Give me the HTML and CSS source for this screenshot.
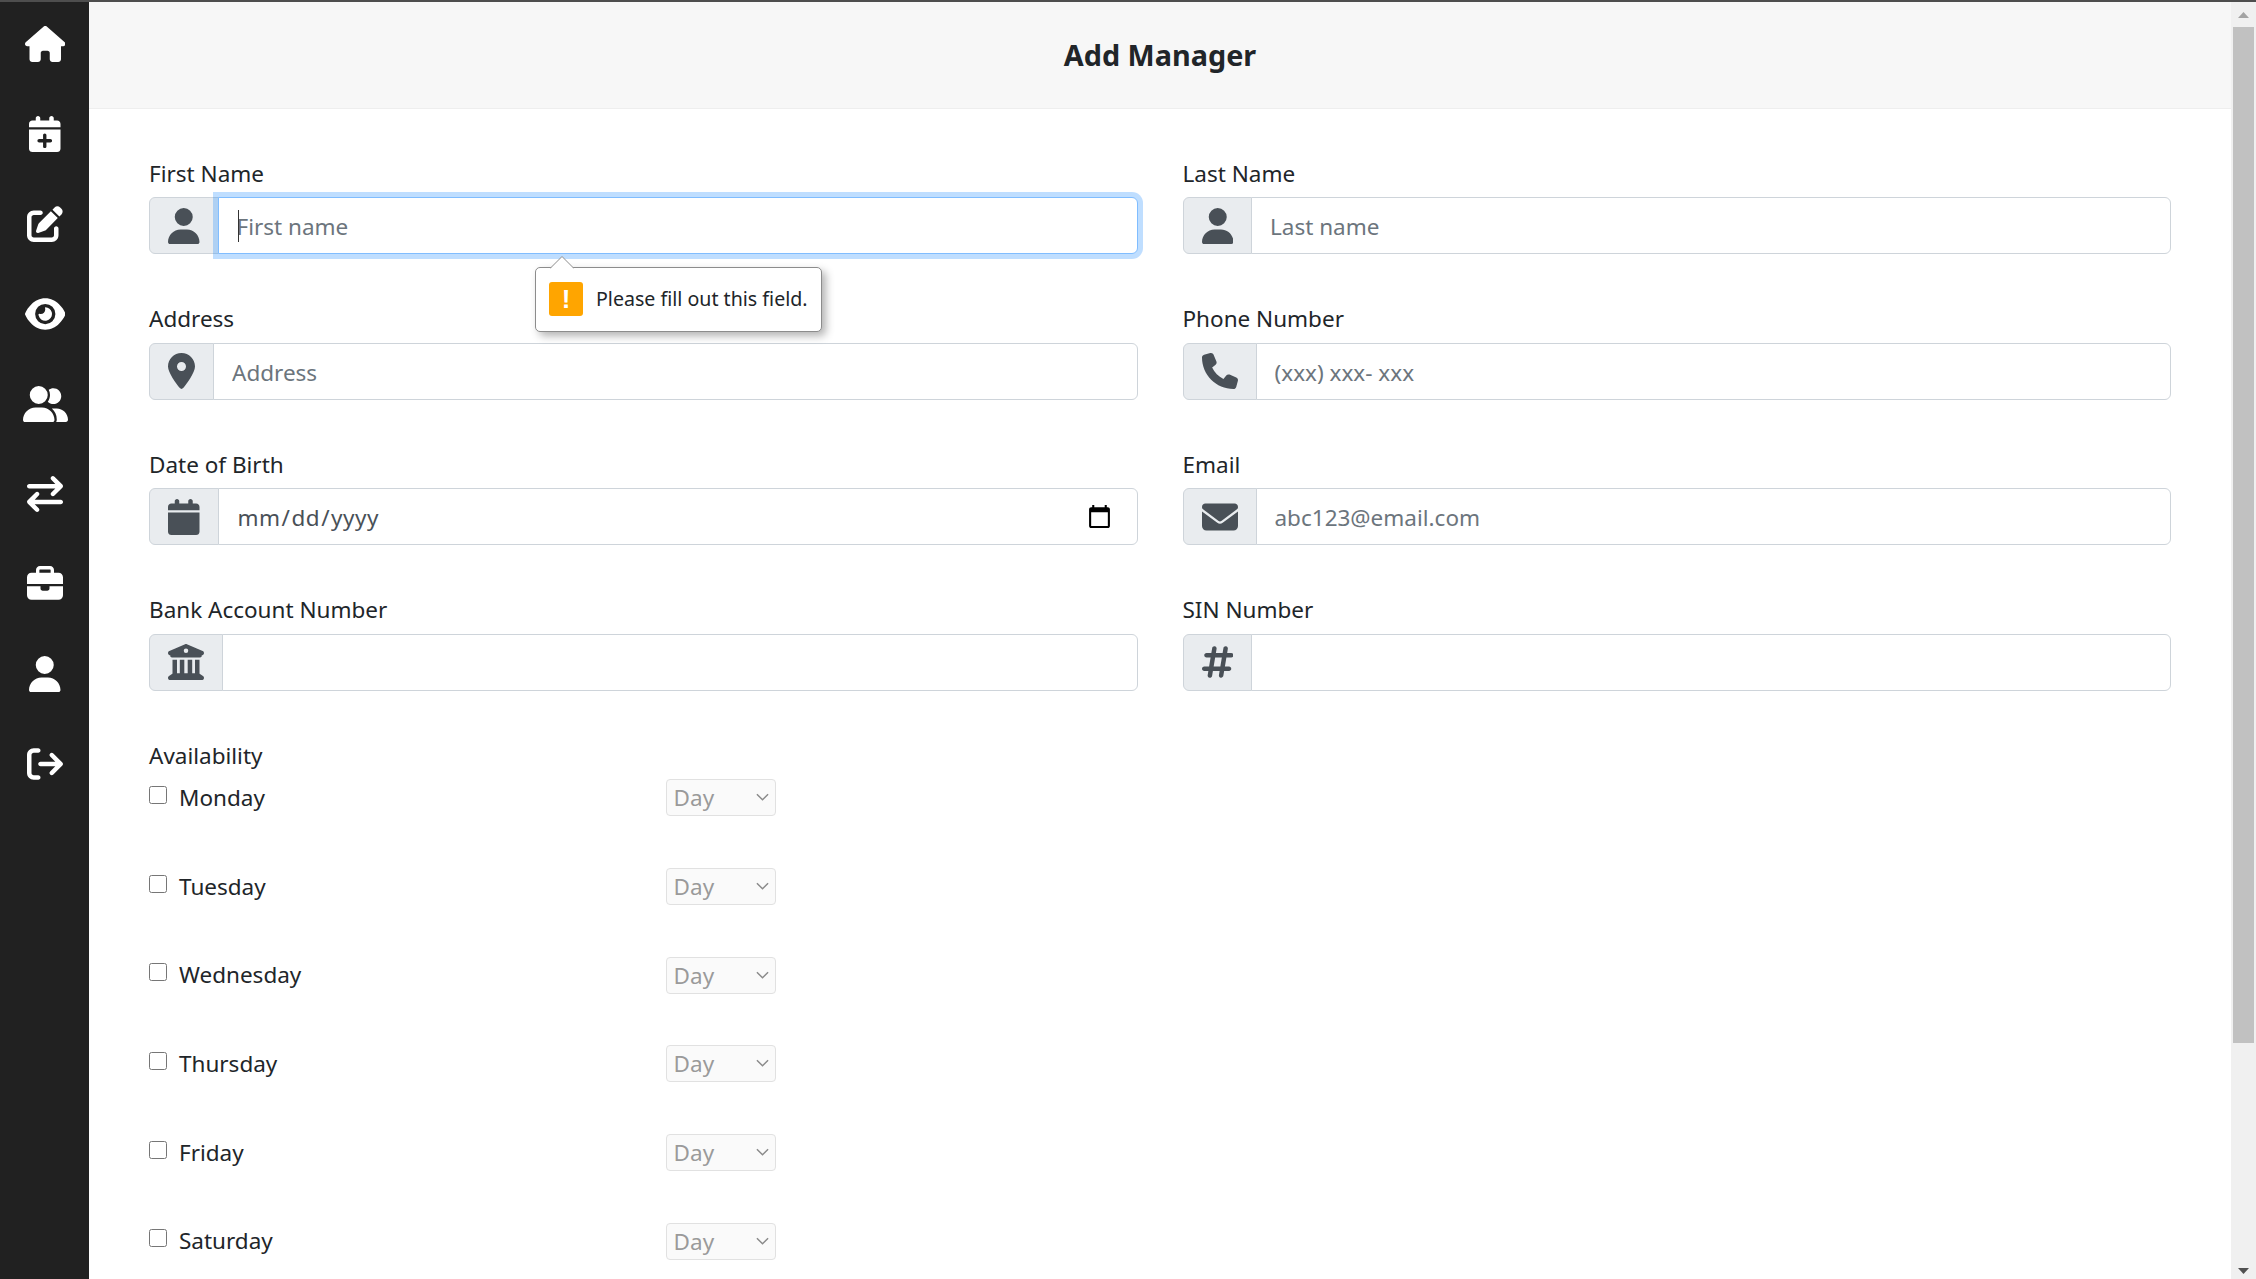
FILE: index.html
```html
<!DOCTYPE html>
<html lang="en">
<head>
<meta charset="utf-8">
<title>Add Manager</title>
<link rel="stylesheet" href="styles.css">
</head>
<body>
<div class="topline"></div>
<div class="shell">
  <nav class="sidebar">
    <svg class="nav-icon" viewBox="0 0 576 512"><path d="M575.8 255.5c0 18-15 32.1-32 32.1h-32l.7 160.2c0 2.7-.2 5.4-.5 8.1V472c0 22.1-17.9 40-40 40H456c-1.1 0-2.2 0-3.3-.1c-1.4 .1-2.8 .1-4.2 .1H416 392c-22.1 0-40-17.9-40-40V448 384c0-17.7-14.3-32-32-32H256c-17.7 0-32 14.3-32 32v64 24c0 22.1-17.9 40-40 40H160 128.1c-1.5 0-3-.1-4.5-.2c-1.2 .1-2.4 .2-3.6 .2H104c-22.1 0-40-17.9-40-40V360c0-.9 0-1.9 .1-2.8V287.6H32c-18 0-32-14-32-32.1c0-9 3-17 10-24L266.4 8c7-7 15-8 22-8s15 2 21 7L564.8 231.5c8 7 12 15 11 24z"/></svg>
    <svg class="nav-icon" viewBox="0 0 448 512"><path d="M96 32V64H48C21.5 64 0 85.5 0 112v48H448V112c0-26.5-21.5-48-48-48H352V32c0-17.7-14.3-32-32-32s-32 14.3-32 32V64H160V32c0-17.7-14.3-32-32-32S96 14.3 96 32zM448 192H0V464c0 26.5 21.5 48 48 48H400c26.5 0 48-21.5 48-48V192zM224 248c13.3 0 24 10.7 24 24v56h56c13.3 0 24 10.7 24 24s-10.7 24-24 24H248v56c0 13.3-10.7 24-24 24s-24-10.7-24-24V376H144c-13.3 0-24-10.7-24-24s10.7-24 24-24h56V272c0-13.3 10.7-24 24-24z"/></svg>
    <svg class="nav-icon" viewBox="0 0 512 512"><path d="M471.6 21.7c-21.9-21.9-57.3-21.9-79.2 0L362.3 51.7l97.9 97.9 30.1-30.1c21.9-21.9 21.9-57.3 0-79.2L471.6 21.7zm-299.2 220c-6.1 6.1-10.8 13.6-13.5 21.9l-29.6 88.8c-2.9 8.6-.6 18.1 5.8 24.6s15.9 8.7 24.6 5.8l88.8-29.6c8.2-2.7 15.7-7.4 21.9-13.5L437.7 172.3 339.7 74.3 172.4 241.7zM96 64C43 64 0 107 0 160V416c0 53 43 96 96 96H352c53 0 96-43 96-96V320c0-17.7-14.3-32-32-32s-32 14.3-32 32v96c0 17.7-14.3 32-32 32H96c-17.7 0-32-14.3-32-32V160c0-17.7 14.3-32 32-32h96c17.7 0 32-14.3 32-32s-14.3-32-32-32H96z"/></svg>
    <svg class="nav-icon" viewBox="0 0 576 512"><path d="M288 32c-80.8 0-145.5 36.8-192.6 80.6C48.6 156 17.3 208 2.5 243.7c-3.3 7.9-3.3 16.7 0 24.6C17.3 304 48.6 356 95.4 399.4C142.5 443.2 207.2 480 288 480s145.5-36.8 192.6-80.6c46.8-43.5 78.1-95.4 93-131.1c3.3-7.9 3.3-16.7 0-24.6c-14.9-35.7-46.2-87.7-93-131.1C433.5 68.8 368.8 32 288 32zM144 256a144 144 0 1 1 288 0 144 144 0 1 1 -288 0zm144-64c0 35.3-28.7 64-64 64c-7.1 0-13.9-1.2-20.3-3.3c-5.5-1.8-11.9 1.6-11.7 7.4c.3 6.9 1.3 13.8 3.2 20.7c13.7 51.2 66.4 81.6 117.6 67.9s81.6-66.4 67.9-117.6c-11.1-41.5-47.8-69.4-88.6-71.1c-5.8-.2-9.2 6.1-7.4 11.7c2.1 6.4 3.3 13.2 3.3 20.3z"/></svg>
    <svg class="nav-icon" viewBox="0 0 640 512"><path d="M96 128a128 128 0 1 1 256 0A128 128 0 1 1 96 128zM0 482.3C0 383.8 79.8 304 178.3 304h91.4C368.2 304 448 383.8 448 482.3c0 16.4-13.3 29.7-29.7 29.7H29.7C13.3 512 0 498.7 0 482.3zM609.3 512H471.4c5.4-9.4 8.6-20.3 8.6-32v-8c0-60.7-27.1-115.2-69.8-151.8c2.4-.1 4.7-.2 7.1-.2h61.4C567.8 320 640 392.2 640 481.3c0 17-13.8 30.7-30.7 30.7zM432 256c-31 0-59-12.6-79.3-32.9C372.4 196.5 384 163.6 384 128c0-26.8-6.6-52.1-18.3-74.3C384.3 40.1 407.2 32 432 32c61.9 0 112 50.1 112 112s-50.1 112-112 112z"/></svg>
    <svg class="nav-icon" viewBox="0 0 512 512"><path d="M32 176h370.8l-57.38 57.38c-12.5 12.5-12.5 32.75 0 45.25C351.6 284.9 359.8 288 368 288s16.38-3.125 22.62-9.375l112-112c12.5-12.5 12.5-32.75 0-45.25l-112-112c-12.5-12.5-32.75-12.5-45.25 0s-12.5 32.75 0 45.25L402.8 112H32c-17.69 0-32 14.31-32 32S14.31 176 32 176zM480 336H109.3l57.38-57.38c12.5-12.5 12.5-32.75 0-45.25s-32.75-12.5-45.25 0l-112 112c-12.5 12.5-12.5 32.75 0 45.25l112 112C127.6 508.9 135.8 512 144 512s16.38-3.125 22.62-9.375c12.5-12.5 12.5-32.75 0-45.25L109.3 400H480c17.69 0 32-14.31 32-32S497.7 336 480 336z"/></svg>
    <svg class="nav-icon" viewBox="0 0 512 512"><path d="M184 48H328c4.4 0 8 3.6 8 8V96H176V56c0-4.4 3.6-8 8-8zm-56 8V96H64C28.7 96 0 124.7 0 160v96H192 320 512V160c0-35.3-28.7-64-64-64H384V56c0-30.9-25.1-56-56-56H184c-30.9 0-56 25.1-56 56zM512 288H320v32c0 17.7-14.3 32-32 32H224c-17.7 0-32-14.3-32-32V288H0V416c0 35.3 28.7 64 64 64H448c35.3 0 64-28.7 64-64V288z"/></svg>
    <svg class="nav-icon" viewBox="0 0 448 512"><path d="M224 256A128 128 0 1 0 224 0a128 128 0 1 0 0 256zm-45.7 48C79.8 304 0 383.8 0 482.3C0 498.7 13.3 512 29.7 512H418.3c16.4 0 29.7-13.3 29.7-29.7C448 383.8 368.2 304 269.7 304H178.3z"/></svg>
    <svg class="nav-icon" viewBox="0 0 512 512"><path d="M502.6 278.6c12.5-12.5 12.5-32.8 0-45.3l-128-128c-12.5-12.5-32.8-12.5-45.3 0s-12.5 32.8 0 45.3L402.7 224 192 224c-17.7 0-32 14.3-32 32s14.3 32 32 32l210.7 0-73.4 73.4c-12.5 12.5-12.5 32.8 0 45.3s32.8 12.5 45.3 0l128-128zM160 96c17.7 0 32-14.3 32-32s-14.3-32-32-32L96 32C43 32 0 75 0 128L0 384c0 53 43 96 96 96l64 0c17.7 0 32-14.3 32-32s-14.3-32-32-32l-64 0c-17.7 0-32-14.3-32-32l0-256c0-17.7 14.3-32 32-32l64 0z"/></svg>
  </nav>

  <main class="main">
    <header class="page-header"><h1 class="page-title">Add Manager</h1></header>
    <form class="form">
      <div class="field-grid">
        <div class="field first-field">
          <label class="field-label">First Name</label>
          <div class="input-group">
            <span class="addon"><svg class="addon-icon" viewBox="0 0 448 512"><path d="M224 256A128 128 0 1 0 224 0a128 128 0 1 0 0 256zm-45.7 48C79.8 304 0 383.8 0 482.3C0 498.7 13.3 512 29.7 512H418.3c16.4 0 29.7-13.3 29.7-29.7C448 383.8 368.2 304 269.7 304H178.3z"/></svg></span>
            <input class="control control-focus" type="text" placeholder="First name">
            <span class="caret"></span>
          </div>
          <div class="tooltip">
            <svg class="tooltip-arrow" viewBox="0 0 24 13"><path d="M0 13 L12 1 L24 13" /></svg>
            <span class="tooltip-badge">!</span>
            <span class="tooltip-text">Please fill out this field.</span>
          </div>
        </div>
        <div class="field">
          <label class="field-label">Last Name</label>
          <div class="input-group">
            <span class="addon"><svg class="addon-icon" viewBox="0 0 448 512"><path d="M224 256A128 128 0 1 0 224 0a128 128 0 1 0 0 256zm-45.7 48C79.8 304 0 383.8 0 482.3C0 498.7 13.3 512 29.7 512H418.3c16.4 0 29.7-13.3 29.7-29.7C448 383.8 368.2 304 269.7 304H178.3z"/></svg></span>
            <input class="control" type="text" placeholder="Last name">
          </div>
        </div>
        <div class="field">
          <label class="field-label">Address</label>
          <div class="input-group">
            <span class="addon"><svg class="addon-icon" viewBox="0 0 384 512"><path d="M215.7 499.2C267 435 384 279.4 384 192C384 86 298 0 192 0S0 86 0 192c0 87.4 117 243 168.3 307.2c12.3 15.3 35.1 15.3 47.4 0zM192 256a64 64 0 1 1 0-128 64 64 0 1 1 0 128z"/></svg></span>
            <input class="control" type="text" placeholder="Address">
          </div>
        </div>
        <div class="field">
          <label class="field-label">Phone Number</label>
          <div class="input-group">
            <span class="addon"><svg class="addon-icon" viewBox="0 0 512 512"><path d="M164.9 24.6c-7.7-18.6-28-28.5-47.4-23.2l-88 24C12.1 30.2 0 46 0 64C0 311.4 200.6 512 448 512c18 0 33.8-12.1 38.6-29.5l24-88c5.3-19.4-4.6-39.7-23.2-47.4l-96-40c-16.3-6.8-35.2-2.1-46.3 11.6L304.7 368C234.3 334.7 177.3 277.7 144 207.3L193.3 167c13.7-11.2 18.4-30 11.6-46.3l-40-96z"/></svg></span>
            <input class="control" type="text" placeholder="(xxx) xxx- xxx">
          </div>
        </div>
        <div class="field">
          <label class="field-label">Date of Birth</label>
          <div class="input-group">
            <span class="addon"><svg class="addon-icon" viewBox="0 0 448 512"><path d="M96 32V64H48C21.5 64 0 85.5 0 112v48H448V112c0-26.5-21.5-48-48-48H352V32c0-17.7-14.3-32-32-32s-32 14.3-32 32V64H160V32c0-17.7-14.3-32-32-32S96 14.3 96 32zM448 192H0V464c0 26.5 21.5 48 48 48H400c26.5 0 48-21.5 48-48V192z"/></svg></span>
            <input class="control control-date" type="date">
          </div>
        </div>
        <div class="field">
          <label class="field-label">Email</label>
          <div class="input-group">
            <span class="addon"><svg class="addon-icon" viewBox="0 0 512 512"><path d="M464 64C490.5 64 512 85.49 512 112C512 127.1 504.9 141.3 492.8 150.4L275.2 313.6C263.8 322.1 248.2 322.1 236.8 313.6L19.2 150.4C7.113 141.3 0 127.1 0 112C0 85.49 21.49 64 48 64H464zM217.6 339.2C240.4 356.3 271.6 356.3 294.4 339.2L512 176V384C512 419.3 483.3 448 448 448H64C28.65 448 0 419.3 0 384V176L217.6 339.2z"/></svg></span>
            <input class="control" type="text" placeholder="abc123@email.com">
          </div>
        </div>
        <div class="field">
          <label class="field-label">Bank Account Number</label>
          <div class="input-group">
            <span class="addon"><svg class="addon-icon" viewBox="0 0 512 512"><path d="M243.4 2.6l-224 96c-14 6-21.8 21-18.7 35.8S16.8 160 32 160v8c0 13.3 10.7 24 24 24H456c13.3 0 24-10.7 24-24v-8c15.2 0 28.3-10.7 31.3-25.6s-4.8-29.9-18.7-35.8l-224-96c-8-3.4-17.2-3.4-25.2 0zM128 224H64V420.3c-.6 .3-1.2 .7-1.8 1.1l-48 32c-11.7 7.8-17 22.4-12.9 35.9S17.9 512 32 512H480c14.1 0 26.5-9.2 30.6-22.7s-1.1-28.1-12.9-35.9l-48-32c-.6-.4-1.2-.7-1.8-1.1V224H384V416H344V224H280V416H232V224H168V416H128V224zM256 64a32 32 0 1 1 0 64 32 32 0 1 1 0-64z"/></svg></span>
            <input class="control" type="text">
          </div>
        </div>
        <div class="field">
          <label class="field-label">SIN Number</label>
          <div class="input-group">
            <span class="addon"><svg class="addon-icon" viewBox="0 0 448 512"><path d="M181.3 32.4c17.4 2.9 29.2 19.4 26.3 36.8L197.8 128h95.1l11.5-69.3c2.9-17.4 19.4-29.2 36.8-26.3s29.2 19.4 26.3 36.8L357.8 128H416c17.7 0 32 14.3 32 32s-14.3 32-32 32H347.1L325.8 320H384c17.7 0 32 14.3 32 32s-14.3 32-32 32H315.1l-11.5 69.3c-2.9 17.4-19.4 29.2-36.8 26.3s-29.2-19.4-26.3-36.8l9.8-58.7H155.1l-11.5 69.3c-2.9 17.4-19.4 29.2-36.8 26.3s-29.2-19.4-26.3-36.8L90.2 384H32c-17.7 0-32-14.3-32-32s14.3-32 32-32h68.9l21.3-128H64c-17.7 0-32-14.3-32-32s14.3-32 32-32h68.9l11.5-69.3c2.9-17.4 19.4-29.2 36.8-26.3zM187.1 192L165.8 320h95.1l21.3-128H187.1z"/></svg></span>
            <input class="control" type="text">
          </div>
        </div>
      </div>

      <section class="availability">
        <div class="availability-title">Availability</div>
        <div class="day-row">
          <label class="day-label"><input class="day-check" type="checkbox">Monday</label>
          <span class="select-wrap"><select class="day-select" disabled><option>Day</option></select><svg class="select-chevron" viewBox="0 0 14 8"><path d="M1 1 L7 7 L13 1"/></svg></span>
        </div>
        <div class="day-row">
          <label class="day-label"><input class="day-check" type="checkbox">Tuesday</label>
          <span class="select-wrap"><select class="day-select" disabled><option>Day</option></select><svg class="select-chevron" viewBox="0 0 14 8"><path d="M1 1 L7 7 L13 1"/></svg></span>
        </div>
        <div class="day-row">
          <label class="day-label"><input class="day-check" type="checkbox">Wednesday</label>
          <span class="select-wrap"><select class="day-select" disabled><option>Day</option></select><svg class="select-chevron" viewBox="0 0 14 8"><path d="M1 1 L7 7 L13 1"/></svg></span>
        </div>
        <div class="day-row">
          <label class="day-label"><input class="day-check" type="checkbox">Thursday</label>
          <span class="select-wrap"><select class="day-select" disabled><option>Day</option></select><svg class="select-chevron" viewBox="0 0 14 8"><path d="M1 1 L7 7 L13 1"/></svg></span>
        </div>
        <div class="day-row">
          <label class="day-label"><input class="day-check" type="checkbox">Friday</label>
          <span class="select-wrap"><select class="day-select" disabled><option>Day</option></select><svg class="select-chevron" viewBox="0 0 14 8"><path d="M1 1 L7 7 L13 1"/></svg></span>
        </div>
        <div class="day-row">
          <label class="day-label"><input class="day-check" type="checkbox">Saturday</label>
          <span class="select-wrap"><select class="day-select" disabled><option>Day</option></select><svg class="select-chevron" viewBox="0 0 14 8"><path d="M1 1 L7 7 L13 1"/></svg></span>
        </div>
      </section>
    </form>
  </main>

  <aside class="scrollbar">
    <div class="scroll-btn"><svg class="scroll-arrow arrow-up" viewBox="0 0 11 6"><path d="M5.5 0 L11 6 H0 Z"/></svg></div>
    <div class="scroll-thumb"></div>
    <div class="scroll-track"></div>
    <div class="scroll-btn scroll-btn-down"><svg class="scroll-arrow arrow-down" viewBox="0 0 11 6"><path d="M0 0 H11 L5.5 6 Z"/></svg></div>
  </aside>
</div>
</body>
</html>
```
FILE: styles.css
```css
* { box-sizing: border-box; }

html, body {
  margin: 0;
  height: 100%;
  overflow: hidden;
  background: #fff;
}

body {
  display: flex;
  flex-direction: column;
  font-family: "Noto Sans", "Open Sans", "Liberation Sans", sans-serif;
  font-size: 22.5px;
  line-height: 36px;
  color: #212529;
}

.topline {
  flex: none;
  height: 2px;
  background: #4e4e4e;
}

.shell {
  flex: 1;
  display: flex;
  min-height: 0;
}

/* Sidebar */
.sidebar {
  flex: none;
  width: 89px;
  display: flex;
  flex-direction: column;
  align-items: center;
  gap: 54px;
  padding: 23.5px 0 0 1px;
  background: #212121;
}

.nav-icon {
  flex: none;
  height: 36px;
  width: auto;
  fill: #fff;
}

/* Main */
.main {
  flex: 1;
  min-width: 0;
  overflow: hidden;
}

.page-header {
  height: 107px;
  display: flex;
  align-items: center;
  justify-content: center;
  background: #f7f7f7;
  border-bottom: 1px solid #eeeeee;
}

.page-title {
  margin: 0;
  font-size: 28.8px;
  font-weight: 700;
  line-height: 36px;
  color: #212529;
}

.form {
  padding: 40px 60px 0 60px;
}

.field-grid {
  display: grid;
  grid-template-columns: 1fr 1fr;
  column-gap: 45px;
  row-gap: 40.6px;
}

.field {
  position: relative;
}

.field-label {
  display: block;
  padding-top: 6.5px;
  margin-bottom: 5.5px;
}

.input-group {
  position: relative;
  display: flex;
  height: 57px;
}

.addon {
  flex: none;
  display: flex;
  align-items: center;
  padding: 0 18px;
  background: #e9ecef;
  border: 1px solid #ced4da;
  border-radius: 6px 0 0 6px;
}

.addon-icon {
  flex: none;
  height: 36px;
  width: auto;
  fill: #495057;
}

.control {
  flex: 1;
  min-width: 0;
  height: 57px;
  margin: 0 0 0 -1px;
  padding: 2px 18px 0;
  font: inherit;
  color: #495057;
  background: #fff;
  border: 1px solid #ced4da;
  border-radius: 0 6px 6px 0;
  outline: none;
}

.control::placeholder {
  color: #6c757d;
  opacity: 1;
}

.control-date {
  letter-spacing: .5px;
}

.control-date::-webkit-calendar-picker-indicator {
  width: 27px;
  height: 27px;
  padding: 0;
  margin: 0 6px 0 0;
}

.control-focus {
  position: relative;
  border-color: #80bdff;
  box-shadow: 0 0 0 5px rgba(0, 123, 255, .25);
}

.caret {
  position: absolute;
  left: 89px;
  top: 13px;
  width: 1px;
  height: 32px;
  background: #333;
}

/* Validation bubble */
.tooltip {
  position: absolute;
  z-index: 5;
  left: 386px;
  top: 117.5px;
  width: 287px;
  height: 65px;
  display: flex;
  align-items: center;
  gap: 13px;
  padding-left: 13px;
  background: #fff;
  border: 1px solid #8c8c8c;
  border-radius: 5px;
  box-shadow: 4px 4px 8px rgba(0, 0, 0, .3);
}

.tooltip-arrow {
  position: absolute;
  left: 14px;
  top: -13px;
  width: 24px;
  height: 14px;
  fill: #fff;
  stroke: #8c8c8c;
  stroke-width: 1;
}

.tooltip-badge {
  flex: none;
  width: 34px;
  height: 34px;
  display: flex;
  align-items: center;
  justify-content: center;
  font-family: "Liberation Sans", sans-serif;
  font-size: 26px;
  font-weight: 700;
  line-height: 34px;
  color: #fff;
  background: #ffa500;
  border-radius: 3px;
}

.tooltip-text {
  font-size: 19.6px;
  line-height: 28px;
  color: #212529;
  white-space: nowrap;
}

/* Availability */
.availability {
  margin-top: 47.6px;
}

.availability-title {
  height: 36px;
  margin-bottom: 5px;
}

.day-row {
  display: grid;
  grid-template-columns: 516.6px 110px;
  align-items: center;
  align-content: start;
  height: 88.7px;
}

.day-label {
  display: flex;
  align-items: center;
  gap: 12px;
}

.day-check {
  flex: none;
  width: 18px;
  height: 18px;
  margin: 0 0 6px 0;
}

.select-wrap {
  position: relative;
  display: block;
  height: 37px;
}

.day-select {
  display: block;
  appearance: none;
  width: 110px;
  height: 37px;
  padding: 0 0 0 7px;
  font: inherit;
  color: #9a9a9a;
  opacity: 1;
  background-color: #fafafa;
  border: 1px solid #e1e1e1;
  border-radius: 4px;
}

.select-chevron {
  position: absolute;
  right: 7px;
  top: 14px;
  width: 13px;
  height: 8px;
  fill: none;
  stroke: #8a8a8a;
  stroke-width: 1.6;
}

/* Painted window scrollbar */
.scrollbar {
  flex: none;
  width: 25px;
  display: flex;
  flex-direction: column;
  align-items: center;
  background: #f0f0f0;
}

.scroll-btn {
  flex: none;
  width: 100%;
  height: 25px;
  display: flex;
  justify-content: center;
  padding-top: 10px;
}

.scroll-btn-down {
  height: 14px;
  padding-top: 3px;
}

.scroll-arrow {
  width: 11px;
  height: 6px;
}

.arrow-up { fill: #a3a3a3; }
.arrow-down { fill: #505050; }

.scroll-thumb {
  flex: none;
  width: 21px;
  height: 1016px;
  background: #c1c1c1;
}

.scroll-track {
  flex: 1;
}
```
